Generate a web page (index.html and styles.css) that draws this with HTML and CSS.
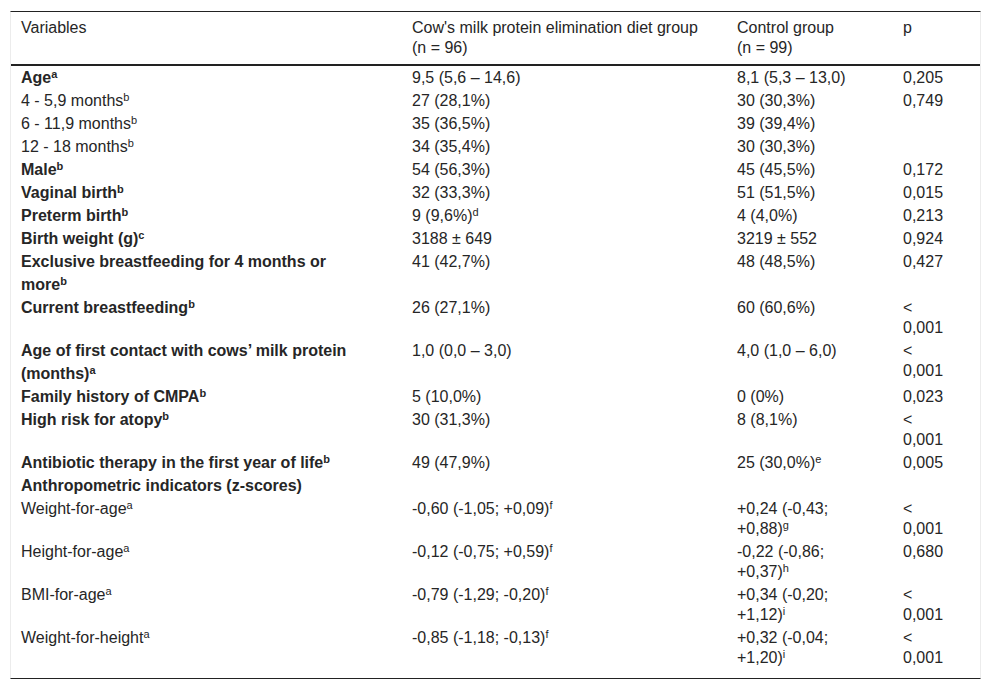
FILE: index.html
```html
<!DOCTYPE html>
<html lang="en">
<head>
<meta charset="utf-8">
<title>Table</title>
<link rel="stylesheet" href="styles.css">
</head>
<body>
<div class="table-wrap">
<table class="data">
<colgroup>
<col class="c1"><col class="c2"><col class="c3"><col class="c4">
</colgroup>
<thead>
<tr>
<th class="v">Variables</th>
<th class="g1">Cow's milk protein elimination diet group<br>(n = 96)</th>
<th class="g2">Control group<br>(n = 99)</th>
<th class="p">p</th>
</tr>
</thead>
<tbody>
<tr><td class="v"><b>Age<sup>a</sup></b></td><td class="g1">9,5 (5,6 – 14,6)</td><td class="g2">8,1 (5,3 – 13,0)</td><td class="p">0,205</td></tr>
<tr><td class="v">4 - 5,9 months<sup>b</sup></td><td class="g1">27 (28,1%)</td><td class="g2">30 (30,3%)</td><td class="p">0,749</td></tr>
<tr><td class="v">6 - 11,9 months<sup>b</sup></td><td class="g1">35 (36,5%)</td><td class="g2">39 (39,4%)</td><td class="p"></td></tr>
<tr><td class="v">12 - 18 months<sup>b</sup></td><td class="g1">34 (35,4%)</td><td class="g2">30 (30,3%)</td><td class="p"></td></tr>
<tr><td class="v"><b>Male<sup>b</sup></b></td><td class="g1">54 (56,3%)</td><td class="g2">45 (45,5%)</td><td class="p">0,172</td></tr>
<tr><td class="v"><b>Vaginal birth<sup>b</sup></b></td><td class="g1">32 (33,3%)</td><td class="g2">51 (51,5%)</td><td class="p">0,015</td></tr>
<tr><td class="v"><b>Preterm birth<sup>b</sup></b></td><td class="g1">9 (9,6%)<sup>d</sup></td><td class="g2">4 (4,0%)</td><td class="p">0,213</td></tr>
<tr><td class="v"><b>Birth weight (g)<sup>c</sup></b></td><td class="g1">3188 ± 649</td><td class="g2">3219 ± 552</td><td class="p">0,924</td></tr>
<tr><td class="v"><b>Exclusive breastfeeding for 4 months or more<sup class="tall">b</sup></b></td><td class="g1">41 (42,7%)</td><td class="g2">48 (48,5%)</td><td class="p">0,427</td></tr>
<tr><td class="v"><b>Current breastfeeding<sup>b</sup></b></td><td class="g1">26 (27,1%)</td><td class="g2">60 (60,6%)</td><td class="p">&lt; 0,001</td></tr>
<tr><td class="v"><b>Age of first contact with cows’ milk protein (months)<sup class="tall">a</sup></b></td><td class="g1">1,0 (0,0 – 3,0)</td><td class="g2">4,0 (1,0 – 6,0)</td><td class="p">&lt; 0,001</td></tr>
<tr><td class="v"><b>Family history of CMPA<sup>b</sup></b></td><td class="g1">5 (10,0%)</td><td class="g2">0 (0%)</td><td class="p">0,023</td></tr>
<tr><td class="v"><b>High risk for atopy<sup>b</sup></b></td><td class="g1">30 (31,3%)</td><td class="g2">8 (8,1%)</td><td class="p">&lt; 0,001</td></tr>
<tr><td class="v"><b>Antibiotic therapy in the first year of life<sup>b</sup></b></td><td class="g1">49 (47,9%)</td><td class="g2">25 (30,0%)<sup>e</sup></td><td class="p">0,005</td></tr>
<tr><td class="v"><b>Anthropometric indicators (z-scores)</b></td><td class="g1"></td><td class="g2"></td><td class="p"></td></tr>
<tr><td class="v">Weight-for-age<sup>a</sup></td><td class="g1">-0,60 (-1,05; +0,09)<sup>f</sup></td><td class="g2">+0,24 (-0,43; +0,88)<sup>g</sup></td><td class="p">&lt; 0,001</td></tr>
<tr><td class="v">Height-for-age<sup>a</sup></td><td class="g1">-0,12 (-0,75; +0,59)<sup>f</sup></td><td class="g2">-0,22 (-0,86; +0,37)<sup>h</sup></td><td class="p">0,680</td></tr>
<tr><td class="v">BMI-for-age<sup>a</sup></td><td class="g1">-0,79 (-1,29; -0,20)<sup>f</sup></td><td class="g2">+0,34 (-0,20; +1,12)<sup>i</sup></td><td class="p">&lt; 0,001</td></tr>
<tr><td class="v">Weight-for-height<sup>a</sup></td><td class="g1">-0,85 (-1,18; -0,13)<sup>f</sup></td><td class="g2">+0,32 (-0,04; +1,20)<sup>i</sup></td><td class="p">&lt; 0,001</td></tr>
</tbody>
</table>
</div>
</body>
</html>
```

FILE: styles.css
```css
html, body {
  margin: 0;
  padding: 0;
  background: #fff;
}

body {
  padding: 11px 11px 0 10px;
  font-family: "Liberation Sans", Arial, sans-serif;
  font-size: 16px;
  line-height: 20px;
  color: #262626;
}

.table-wrap {
  width: 969px;
  border-left: 1px solid #ececec;
  border-right: 1px solid #ececec;
  border-top: 1px solid #222;
  border-bottom: 1px solid #222;
  padding-bottom: 9px;
}

.data {
  width: 969px;
  table-layout: fixed;
  border-collapse: collapse;
  border-spacing: 0;
}

.c1 { width: 391px; }
.c2 { width: 325px; }
.c3 { width: 166px; }
.c4 { width: 87px; }

th, td {
  text-align: left;
  vertical-align: top;
  font-weight: normal;
  padding: 2px 10px 1px 10px;
}

thead th {
  padding-top: 6px;
  padding-bottom: 6px;
  border-bottom: 2px solid #222;
}

td.v, th.v { padding-right: 45px; }
td.g1, th.g1 { padding-right: 10px; }
td.g2, th.g2 { padding-right: 31px; }
td.p, th.p { padding-right: 29px; }

b {
  font-weight: bold;
}

sup {
  font-size: 11px;
  line-height: 0;
  vertical-align: 5px;
}

sup.tall {
  line-height: 18px;
}
```
